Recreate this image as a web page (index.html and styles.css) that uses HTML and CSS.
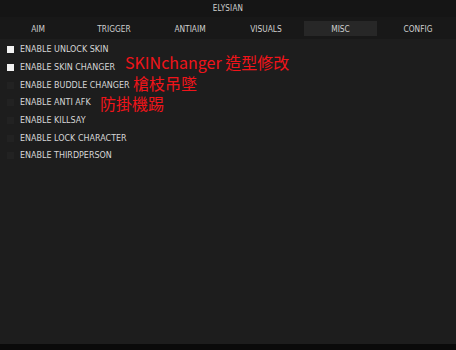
FILE: index.html
```html
<!DOCTYPE html>
<html>
<head>
<meta charset="utf-8">
<link rel="stylesheet" href="styles.css">
</head>
<body>
<div class="window">
  <div class="titlebar">ELYSIAN</div>
  <div class="tabs">
    <div class="tab">AIM</div>
    <div class="tab">TRIGGER</div>
    <div class="tab">ANTIAIM</div>
    <div class="tab">VISUALS</div>
    <div class="tab active">MISC</div>
    <div class="tab">CONFIG</div>
  </div>
  <div class="content">
    <div class="row"><span class="box on"></span><span class="label">ENABLE UNLOCK SKIN</span></div>
    <div class="row"><span class="box on"></span><span class="label">ENABLE SKIN CHANGER</span><span class="note n1">SKINchanger 造型修改</span></div>
    <div class="row"><span class="box"></span><span class="label">ENABLE BUDDLE CHANGER</span><span class="note n2">槍枝吊墜</span></div>
    <div class="row"><span class="box"></span><span class="label">ENABLE ANTI AFK</span><span class="note n3">防掛機踢</span></div>
    <div class="row"><span class="box"></span><span class="label">ENABLE KILLSAY</span></div>
    <div class="row"><span class="box"></span><span class="label">ENABLE LOCK CHARACTER</span></div>
    <div class="row"><span class="box"></span><span class="label">ENABLE THIRDPERSON</span></div>
  </div>
  <div class="bottom"></div>
</div>
</body>
</html>
```
FILE: styles.css
```css
* { box-sizing: border-box; }
html, body { margin: 0; padding: 0; background: #1c1c1c; }
.window {
  width: 456px; height: 350px;
  display: flex; flex-direction: column;
  font-family: "DejaVu Sans Condensed", "DejaVu Sans", sans-serif;
  color: #d8d8d8;
}
.titlebar {
  height: 17px; background: #151515;
  display: flex; align-items: center; justify-content: center;
  font-size: 8px; color: #d0d0d0; letter-spacing: 0.2px;
}
.tabs {
  height: 22px; background: #181818;
  display: grid; grid-template-columns: repeat(6, 1fr);
  padding: 4px 0 3px;
}
.tab {
  display: flex; align-items: center; justify-content: center;
  font-size: 8.3px; color: #cfcfcf; padding-top: 1px;
}
.tab.active { background: #272727; margin: 0 3px 0 0; }
.content {
  flex: 1; background: #1d1d1d;
  padding: 2px 0 0 7px;
  position: relative;
}
.row {
  height: 17.7px; display: flex; align-items: center; gap: 6px;
  position: relative;
}
.box { width: 7px; height: 7px; background: #222222; flex: none; }
.box.on { background: #f2f2f2; }
.label {
  font-family: "DejaVu Sans", sans-serif;
  font-size: 8px; color: #d6d6d6;
}
.note {
  position: absolute;
  font-family: "Noto Sans CJK TC", "Noto Sans", sans-serif;
  color: #f0141a; font-size: 16px; white-space: nowrap; line-height: 15px;
}
.n1 { left: 118px; top: -4px; }
.n2 { left: 126px; top: 0px; }
.n3 { left: 93px; top: 2px; }
.bottom { height: 6px; background: #0a0a0a; }
```
